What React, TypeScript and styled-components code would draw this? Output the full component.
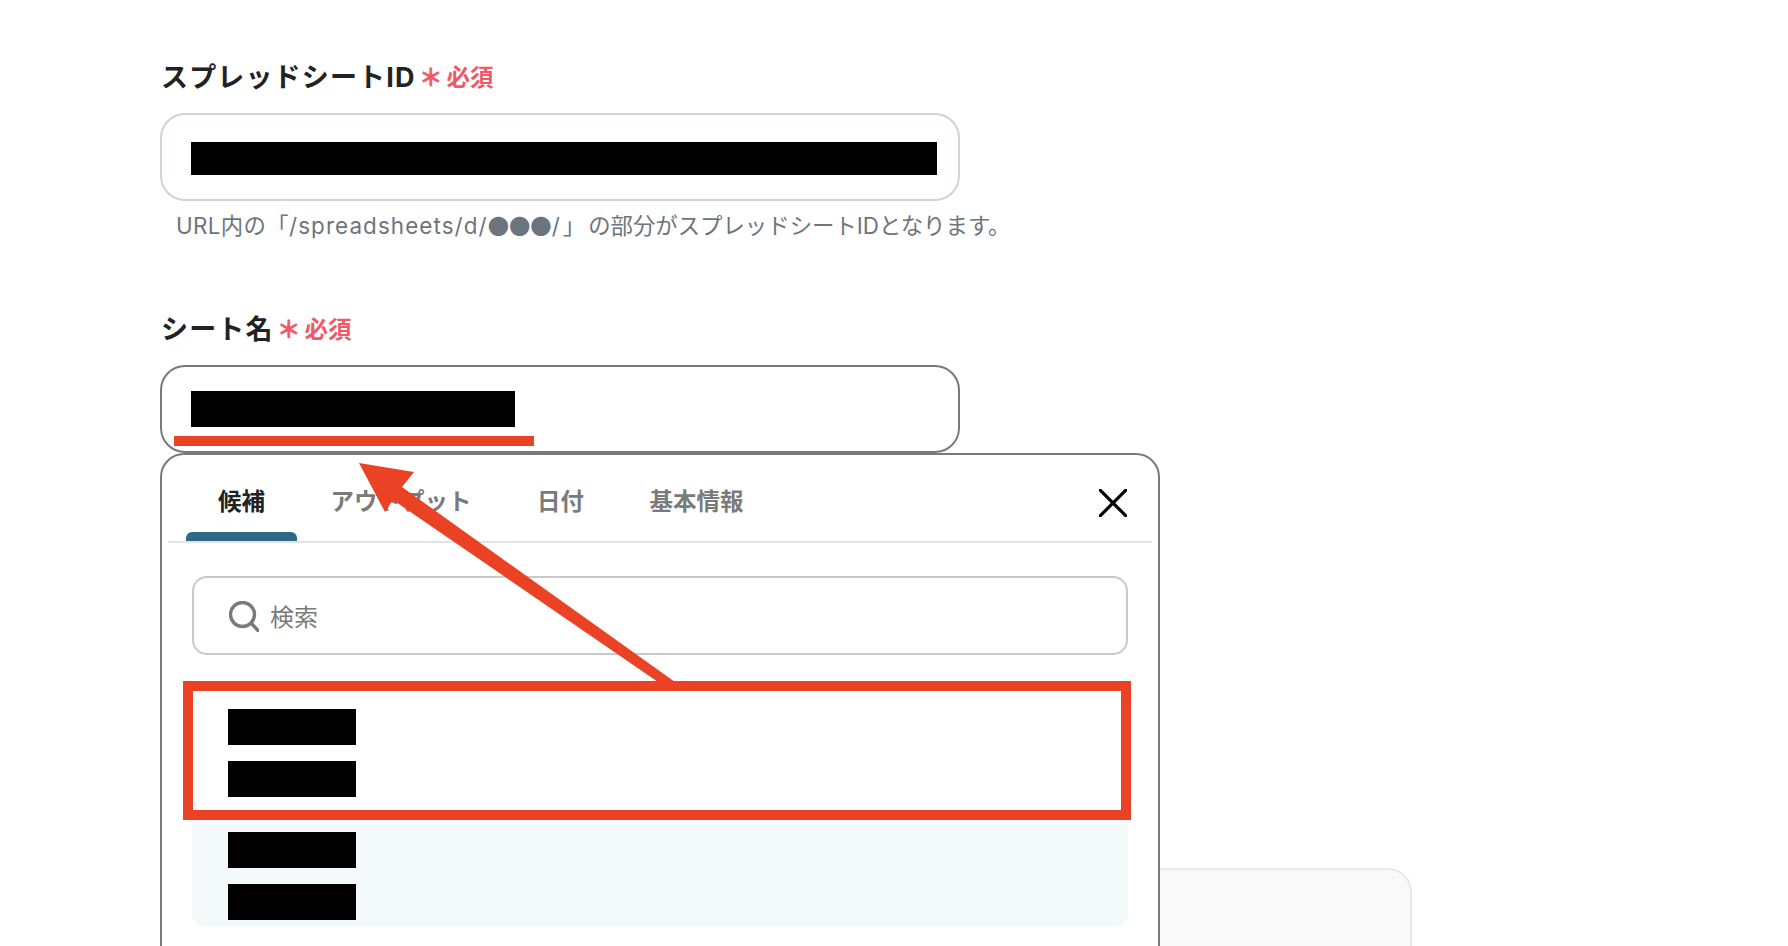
// App.tsx
import React from 'react';
import styled, { createGlobalStyle } from 'styled-components';

const GlobalStyle = createGlobalStyle`
  html, body {
    margin: 0;
    padding: 0;
    background: #ffffff;
  }
  * {
    box-sizing: border-box;
  }
`;

const Page = styled.div`
  position: relative;
  width: 1788px;
  height: 946px;
  overflow: hidden;
  padding: 59px 0 0 160px;
  background: #ffffff;
  font-family: Inter, "Noto Sans CJK JP", sans-serif;
`;

const Field = styled.div`
  position: relative;
  width: 800px;
  & + & {
    margin-top: 69px;
  }
`;

const Label = styled.div`
  display: flex;
  align-items: center;
  height: 34px;
  padding: 3px 0 0 1px;
  font-size: 27px;
  font-weight: 700;
  color: #222222;
  line-height: 31px;
  letter-spacing: 1.15px;
`;

const Required = styled.span`
  margin-left: 3.5px;
  font-size: 23.5px;
  font-weight: 700;
  letter-spacing: 0;
  color: #ee5a68;
`;

const Star = styled.span`
  margin-right: 4px;
  -webkit-text-stroke: 0.6px #ee5a68;
`;

const InputBox = styled.div<{ $active?: boolean }>`
  position: relative;
  display: flex;
  align-items: center;
  height: 88px;
  margin-top: 20px;
  padding-left: 29px;
  background: #ffffff;
  border: 2px solid ${(p) => (p.$active ? '#7a7a7a' : '#ced4da')};
  border-radius: 25px;
`;

const Redact = styled.div<{ $w: number; $h: number; $top?: number }>`
  flex: none;
  width: ${(p) => p.$w}px;
  height: ${(p) => p.$h}px;
  margin-top: ${(p) => p.$top ?? 0}px;
  background: #000000;
`;

const Helper = styled.p`
  margin: 8px 0 0 16px;
  width: 840px;
  height: 33px;
  font-size: 22.4px;
  line-height: 33px;
  color: #6c757d;
  white-space: nowrap;
`;

const Spaced = styled.span<{ $spacing: number }>`
  letter-spacing: ${(p) => p.$spacing}px;
`;

const Dots = styled.span`
  font-family: "Noto Sans CJK JP", sans-serif;
  font-size: 21.3px;
  line-height: 0;
`;

const Underline = styled.div`
  position: absolute;
  left: 12px;
  bottom: 5px;
  width: 360px;
  height: 10px;
  background: #eb4124;
`;

const Popover = styled.div`
  position: absolute;
  left: 0;
  top: 100%;
  z-index: 2;
  width: 1000px;
  height: 600px;
  background: #ffffff;
  border: 2px solid #7a7a7a;
  border-radius: 24px;
`;

const TabRow = styled.div`
  display: flex;
  justify-content: space-between;
  height: 88px;
  margin: 0 6px;
  padding-left: 18px;
  border-bottom: 2px solid #e3e3e3;
`;

const Tabs = styled.div`
  display: flex;
  gap: 1.5px;
`;

const Tab = styled.div<{ $active?: boolean }>`
  display: flex;
  flex-direction: column;
  padding: 32px 32px 0;
  font-size: 23.5px;
  font-weight: 700;
  line-height: 30px;
  color: ${(p) => (p.$active ? '#222222' : '#7a7a7a')};
  ${(p) =>
    p.$active &&
    `
    &::after {
      content: '';
      margin: auto -32px 0;
      height: 9px;
      background: #2e6a85;
      border-radius: 6px 6px 0 0;
    }
  `}
`;

const CloseButton = styled.div`
  width: 28px;
  height: 28px;
  margin: 34px 25px 0 0;
  svg {
    display: block;
  }
`;

const PanelBody = styled.div`
  padding: 33px 30px 0;
`;

const SearchBox = styled.div`
  display: flex;
  align-items: center;
  gap: 11px;
  height: 79px;
  padding: 0 0 0 35px;
  border: 2px solid #c9c9c9;
  border-radius: 15px;
  color: #7a7a7a;
  font-size: 24px;
  svg {
    flex: none;
    margin-top: 2px;
  }
`;

const List = styled.div`
  display: flex;
  flex-direction: column;
  gap: 6px;
  margin-top: 32px;
`;

const Row = styled.div<{ $tinted?: boolean }>`
  position: relative;
  display: flex;
  flex-direction: column;
  gap: 16px;
  padding: 22px 36px 7px;
  border-radius: 14px;
  background: ${(p) => (p.$tinted ? '#f4f9f9' : '#ffffff')};
`;

const Highlight = styled.div`
  position: absolute;
  left: -9px;
  top: -6px;
  z-index: 3;
  width: 948px;
  height: 139px;
  border: 10px solid #eb4124;
`;

const BackCard = styled.div`
  width: 1252px;
  height: 200px;
  margin-top: 415px;
  background: #f9f9f9;
  border: 2px solid #e8e8e8;
  border-radius: 24px;
`;

const ArrowLayer = styled.svg`
  position: absolute;
  left: 0;
  top: 0;
  z-index: 4;
  pointer-events: none;
`;

const App: React.FC = () => {
  return (
    <Page>
      <GlobalStyle />

      <Field>
        <Label>
          スプレッドシートID
          <Required>
            <Star>＊</Star>必須
          </Required>
        </Label>
        <InputBox>
          <Redact $w={746} $h={33} $top={3} />
        </InputBox>
        <Helper>
          <Spaced $spacing={0.35}>URL内の「</Spaced>
          <Spaced $spacing={1.1}>/spreadsheets/d/</Spaced>
          <Dots>●●●</Dots>
          <Spaced $spacing={3}>/」</Spaced>の部分がスプレッドシートIDとなります。
        </Helper>
      </Field>

      <Field>
        <Label>
          シート名
          <Required>
            <Star>＊</Star>必須
          </Required>
        </Label>
        <InputBox $active>
          <Redact $w={324} $h={36} />
          <Underline />
        </InputBox>

        <Popover>
          <TabRow>
            <Tabs>
              <Tab $active>候補</Tab>
              <Tab>アウトプット</Tab>
              <Tab>日付</Tab>
              <Tab>基本情報</Tab>
            </Tabs>
            <CloseButton>
              <svg width="28" height="28" viewBox="0 0 28 28" fill="none">
                <path d="M1 1 L27 27 M27 1 L1 27" stroke="#000000" strokeWidth="3.2" strokeLinecap="round" />
              </svg>
            </CloseButton>
          </TabRow>

          <PanelBody>
            <SearchBox>
              <svg width="30" height="31" viewBox="0 0 30 31" fill="none">
                <circle cx="13.5" cy="13.5" r="12" stroke="#7a7a7a" strokeWidth="3.4" />
                <path d="M22.5 22.5 L29 29.5" stroke="#7a7a7a" strokeWidth="3.4" strokeLinecap="round" />
              </svg>
              <span>検索</span>
            </SearchBox>

            <List>
              <Row>
                <Redact $w={128} $h={36} />
                <Redact $w={128} $h={36} />
                <Highlight />
              </Row>
              <Row $tinted>
                <Redact $w={128} $h={36} />
                <Redact $w={128} $h={36} />
              </Row>
            </List>
          </PanelBody>
        </Popover>
      </Field>

      <BackCard />

      {/* annotation arrow drawn over the panel */}
      <ArrowLayer width="1788" height="946" viewBox="0 0 1788 946">
        <polygon
          points="359,463 414,472 402,487 675,682 658,682 393,500 385,512"
          fill="#eb4124"
        />
      </ArrowLayer>
    </Page>
  );
};

export default App;
